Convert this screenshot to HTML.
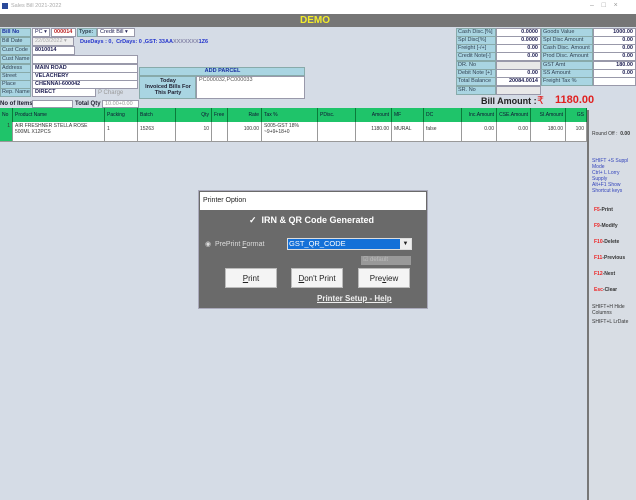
<!DOCTYPE html>
<html><head><style>
*{margin:0;padding:0;box-sizing:border-box}
body{width:636px;height:500px;overflow:hidden;background:#d5dce6;font-family:"Liberation Sans",sans-serif;font-size:6px;position:relative;color:#222}
.a{position:absolute;white-space:nowrap}
.lb{position:absolute;background:#a9d5e2;border:1px solid #8aa;color:#345;font-size:5.5px;line-height:7px;padding-left:1px;white-space:nowrap;overflow:hidden}
.bx{position:absolute;background:#fff;border:1px solid #99a;font-size:5.5px;line-height:7px;padding-left:2px;color:#225;font-weight:bold;white-space:nowrap;overflow:hidden}
.g{position:absolute;top:108px;height:14px;background:#1fc46a;border-right:1px solid #0a7a3a;font-size:5px;line-height:14px;padding:0 2px;color:#113;white-space:nowrap;overflow:hidden}
.c{position:absolute;top:122px;height:14px;background:#fff;border-right:1px solid #999;font-size:5px;padding:1px 2px;color:#333;line-height:6px;overflow:hidden}
.e{position:absolute;top:136px;height:6px;background:#fff;border-right:1px solid #999;border-bottom:1px solid #999}
.btn{position:absolute;top:268px;width:52px;height:20px;background:#f4f4f4;border:1px solid #bbb;font-size:8px;line-height:19px;text-align:center;color:#222}
.r{text-align:right;padding-right:2px}
</style></head><body>
<div class="a" style="left:0;top:0;width:636px;height:14px;background:#fff"></div>
<div class="a" style="left:2px;top:3px;width:6px;height:6px;background:#2a4a9a"></div>
<div class="a" style="left:11px;top:3px;font-size:5.5px;color:#aaa">Sales Bill 2021-2022</div>
<div class="a" style="left:590px;top:2px;font-size:7px;color:#999">–&nbsp;&nbsp;&nbsp;&nbsp;□&nbsp;&nbsp;&nbsp;&nbsp;×</div>
<div class="a" style="left:0;top:14px;width:636px;height:13px;background:#767676"></div>
<div class="a" style="left:300px;top:14px;font-size:10px;font-weight:bold;color:#f2ec2a;line-height:13px">DEMO</div>

<div class="lb" style="left:0;top:28px;width:31px;height:9px;color:#1a2fa0;font-weight:bold">Bill No</div>
<div class="bx" style="left:32px;top:28px;width:18px;height:9px;font-weight:normal">PC ▾</div>
<div class="bx" style="left:51px;top:28px;width:25px;height:9px;color:#b22">000014</div>
<div class="lb" style="left:77px;top:28px;width:20px;height:9px;font-weight:bold">Type:</div>
<div class="bx" style="left:97px;top:28px;width:38px;height:9px;font-weight:normal">Credit Bill ▾</div>
<div class="lb" style="left:0;top:37px;width:31px;height:9px">Bill Date</div>
<div class="bx" style="left:32px;top:37px;width:42px;height:9px;background:#eee;color:#aaa;font-weight:normal">22/03/2022 ▾</div>
<div class="a" style="left:80px;top:39px;color:#2233cc;font-weight:bold;font-size:5.5px">DueDays : 0,&nbsp; CrDays: 0 ,GST: 33AA<span style="color:#88a">XXXXXXX</span>1Z6</div>
<div class="lb" style="left:0;top:46px;width:31px;height:9px">Cust Code</div>
<div class="bx" style="left:32px;top:46px;width:43px;height:9px">8010014</div>
<div class="lb" style="left:0;top:55px;width:31px;height:9px">Cust Name</div>
<div class="bx" style="left:32px;top:55px;width:106px;height:9px"></div>
<div class="lb" style="left:0;top:64px;width:31px;height:9px">Address</div>
<div class="bx" style="left:32px;top:64px;width:106px;height:9px">MAIN ROAD</div>
<div class="lb" style="left:0;top:72px;width:31px;height:9px">Street</div>
<div class="bx" style="left:32px;top:72px;width:106px;height:9px">VELACHERY</div>
<div class="lb" style="left:0;top:80px;width:31px;height:9px">Place</div>
<div class="bx" style="left:32px;top:80px;width:106px;height:9px">CHENNAI-600042</div>
<div class="lb" style="left:0;top:88px;width:31px;height:9px">Rep. Name</div>
<div class="bx" style="left:32px;top:88px;width:64px;height:9px">DIRECT</div>
<div class="a" style="left:98px;top:90px;color:#999">P Charge</div>
<div class="a" style="left:0;top:101px;font-weight:bold;color:#223">No of Items:</div>
<div class="bx" style="left:32px;top:100px;width:41px;height:8px"></div>
<div class="a" style="left:75px;top:101px;font-weight:bold;color:#223">Total Qty</div>
<div class="bx" style="left:102px;top:100px;width:37px;height:8px;color:#999;font-weight:normal">10.00+0.00</div>

<div class="lb" style="left:139px;top:67px;width:166px;height:9px;text-align:center;color:#1a2fa0;font-weight:bold">ADD PARCEL</div>
<div class="lb" style="left:139px;top:76px;width:57px;height:23px;font-weight:bold;color:#223;text-align:center;line-height:6px;padding-top:1px;white-space:normal">Today<br>Invoiced Bills For<br>This Party</div>
<div class="bx" style="left:196px;top:76px;width:109px;height:23px;font-weight:normal;color:#555">PC000032,PC000033</div>

<div class="lb" style="left:456px;top:28px;width:40px;height:9px">Cash Disc.[%]</div><div class="bx r" style="left:496px;top:28px;width:45px;height:9px">0.0000</div>
<div class="lb" style="left:456px;top:36px;width:40px;height:9px">Spl Disc[%]</div><div class="bx r" style="left:496px;top:36px;width:45px;height:9px">0.0000</div>
<div class="lb" style="left:456px;top:44px;width:40px;height:9px">Freight [-/+]</div><div class="bx r" style="left:496px;top:44px;width:45px;height:9px">0.00</div>
<div class="lb" style="left:456px;top:52px;width:40px;height:9px">Credit Note[-]</div><div class="bx r" style="left:496px;top:52px;width:45px;height:9px">0.00</div>
<div class="lb" style="left:456px;top:61px;width:40px;height:9px">DR. No</div><div class="bx" style="left:496px;top:61px;width:45px;height:9px;background:#e8e8e8"></div>
<div class="lb" style="left:456px;top:69px;width:40px;height:9px">Debit Note [+]</div><div class="bx r" style="left:496px;top:69px;width:45px;height:9px">0.00</div>
<div class="lb" style="left:456px;top:77px;width:40px;height:9px">Total Balance</div><div class="bx r" style="left:496px;top:77px;width:45px;height:9px">20084.0014</div>
<div class="lb" style="left:456px;top:86px;width:40px;height:9px">SR. No</div><div class="bx" style="left:496px;top:86px;width:45px;height:9px;background:#e8e8e8"></div>
<div class="lb" style="left:541px;top:28px;width:52px;height:9px">Goods Value</div><div class="bx r" style="left:593px;top:28px;width:43px;height:9px">1000.00</div>
<div class="lb" style="left:541px;top:36px;width:52px;height:9px">Spl Disc Amount</div><div class="bx r" style="left:593px;top:36px;width:43px;height:9px">0.00</div>
<div class="lb" style="left:541px;top:44px;width:52px;height:9px">Cash Disc. Amount</div><div class="bx r" style="left:593px;top:44px;width:43px;height:9px">0.00</div>
<div class="lb" style="left:541px;top:52px;width:52px;height:9px">Prod Disc. Amount</div><div class="bx r" style="left:593px;top:52px;width:43px;height:9px">0.00</div>
<div class="lb" style="left:541px;top:61px;width:52px;height:9px">GST Amt</div><div class="bx r" style="left:593px;top:61px;width:43px;height:9px">180.00</div>
<div class="lb" style="left:541px;top:69px;width:52px;height:9px">SS Amount</div><div class="bx r" style="left:593px;top:69px;width:43px;height:9px">0.00</div>
<div class="lb" style="left:541px;top:77px;width:52px;height:9px">Freight Tax %</div><div class="bx" style="left:593px;top:77px;width:43px;height:9px"></div>
<div class="a" style="left:481px;top:96px;font-size:9px;font-weight:bold;color:#222">Bill Amount :</div>
<div class="a" style="left:537px;top:94px;font-size:11px;color:#e02020">₹</div>
<div class="a" style="left:555px;top:94px;font-size:11px;font-weight:bold;color:#e02020">1180.00</div>

<div class="g" style="left:0;width:13px">No</div>
<div class="g" style="left:13px;width:92px">Product Name</div>
<div class="g" style="left:105px;width:33px">Packing</div>
<div class="g" style="left:138px;width:38px">Batch</div>
<div class="g r" style="left:176px;width:36px">Qty</div>
<div class="g" style="left:212px;width:16px">Free</div>
<div class="g r" style="left:228px;width:34px">Rate</div>
<div class="g" style="left:262px;width:56px">Tax %</div>
<div class="g" style="left:318px;width:38px">PDisc.</div>
<div class="g r" style="left:356px;width:36px">Amount</div>
<div class="g" style="left:392px;width:32px">MF</div>
<div class="g" style="left:424px;width:38px">DC</div>
<div class="g r" style="left:462px;width:35px">Inc.Amount</div>
<div class="g r" style="left:497px;width:34px">CSE.Amount</div>
<div class="g r" style="left:531px;width:35px">SI.Amount</div>
<div class="g r" style="left:566px;width:21px">GS</div>

<div class="c" style="left:0;width:13px;background:#1fc46a;text-align:right">1</div>
<div class="c" style="left:13px;width:92px">AIR FRESHNER STELLA ROSE 500ML X12PCS</div>
<div class="c" style="left:105px;width:33px;padding-top:4px">1</div>
<div class="c" style="left:138px;width:38px;padding-top:4px">15263</div>
<div class="c r" style="left:176px;width:36px;padding-top:4px">10</div>
<div class="c" style="left:212px;width:16px"></div>
<div class="c r" style="left:228px;width:34px;padding-top:4px">100.00</div>
<div class="c" style="left:262px;width:56px">S005-GST 18% ~9+9+18+0</div>
<div class="c" style="left:318px;width:38px"></div>
<div class="c r" style="left:356px;width:36px;padding-top:4px">1180.00</div>
<div class="c" style="left:392px;width:32px;padding-top:4px">MURAL</div>
<div class="c" style="left:424px;width:38px;padding-top:4px">false</div>
<div class="c r" style="left:462px;width:35px;padding-top:4px">0.00</div>
<div class="c r" style="left:497px;width:34px;padding-top:4px">0.00</div>
<div class="c r" style="left:531px;width:35px;padding-top:4px">180.00</div>
<div class="c r" style="left:566px;width:21px;padding-top:4px">100</div>
<div class="e" style="left:0;width:13px;background:#1fc46a"></div>
<div class="e" style="left:13px;width:92px"></div><div class="e" style="left:105px;width:33px"></div><div class="e" style="left:138px;width:38px"></div><div class="e" style="left:176px;width:36px"></div><div class="e" style="left:212px;width:16px"></div><div class="e" style="left:228px;width:34px"></div><div class="e" style="left:262px;width:56px"></div><div class="e" style="left:318px;width:38px"></div><div class="e" style="left:356px;width:36px"></div><div class="e" style="left:392px;width:32px"></div><div class="e" style="left:424px;width:38px"></div><div class="e" style="left:462px;width:35px"></div><div class="e" style="left:497px;width:34px"></div><div class="e" style="left:531px;width:35px"></div><div class="e" style="left:566px;width:21px"></div>

<div class="a" style="left:587px;top:110px;width:49px;height:390px;background:#d8dde4;border-left:2px solid #777"></div>
<div class="a" style="left:592px;top:131px;font-size:5px;color:#333">Round Off : &nbsp;<b>0.00</b></div>
<div class="a" style="left:592px;top:158px;font-size:5px;color:#3344bb;line-height:6px">SHIFT +S Suppl<br>Mode<br>Ctrl+ L Lorry<br>Supply<br>Alt+F1 Show<br>Shortcut keys</div>
<div class="a" style="left:594px;top:202px;font-size:5px;font-weight:bold;color:#333;line-height:16px"><span style="color:#e22">F5</span>-Print<br><span style="color:#e22">F9</span>-Modify<br><span style="color:#e22">F10</span>-Delete<br><span style="color:#e22">F11</span>-Previous<br><span style="color:#e22">F12</span>-Next<br><span style="color:#e22">Esc</span>-Clear</div>
<div class="a" style="left:592px;top:304px;font-size:5px;color:#333;line-height:6px">SHIFT+H Hide<br>Columns</div>
<div class="a" style="left:592px;top:319px;font-size:5px;color:#333">SHIFT+L LrDate</div>

<div class="a" style="left:198px;top:190px;width:230px;height:119px;background:#6a6a6a;border:1px solid #aab"></div>
<div class="a" style="left:200px;top:192px;width:226px;height:18px;background:#fff;font-size:7px;line-height:18px;padding-left:3px;color:#222">Printer Option</div>
<div class="a" style="left:249px;top:215px;font-size:9px;font-weight:bold;color:#fff">✓&nbsp; IRN &amp; QR Code Generated</div>
<div class="a" style="left:205px;top:240px;font-size:7px;color:#ddd">◉ &nbsp;PrePrint <u>F</u>ormat</div>
<div class="a" style="left:287px;top:238px;width:125px;height:12px;background:#1470d8;border:1px solid #ddd;font-size:7.5px;color:#fff;line-height:10px;padding-left:1px">GST_QR_CODE</div>
<div class="a" style="left:400px;top:239px;width:11px;height:10px;background:#eee;font-size:6px;text-align:center;line-height:10px;color:#222">▼</div>
<div class="a" style="left:361px;top:256px;width:50px;height:9px;background:#999;color:#bbb;font-size:6px;line-height:9px;padding-left:2px">☑ default</div>
<div class="btn" style="left:225px"><u>P</u>rint</div>
<div class="btn" style="left:291px"><u>D</u>on't Print</div>
<div class="btn" style="left:358px">Pre<u>v</u>iew</div>
<div class="a" style="left:317px;top:294px;font-size:8px;font-weight:bold;color:#eee;text-decoration:underline">Printer Setup - Help</div>
</body></html>
